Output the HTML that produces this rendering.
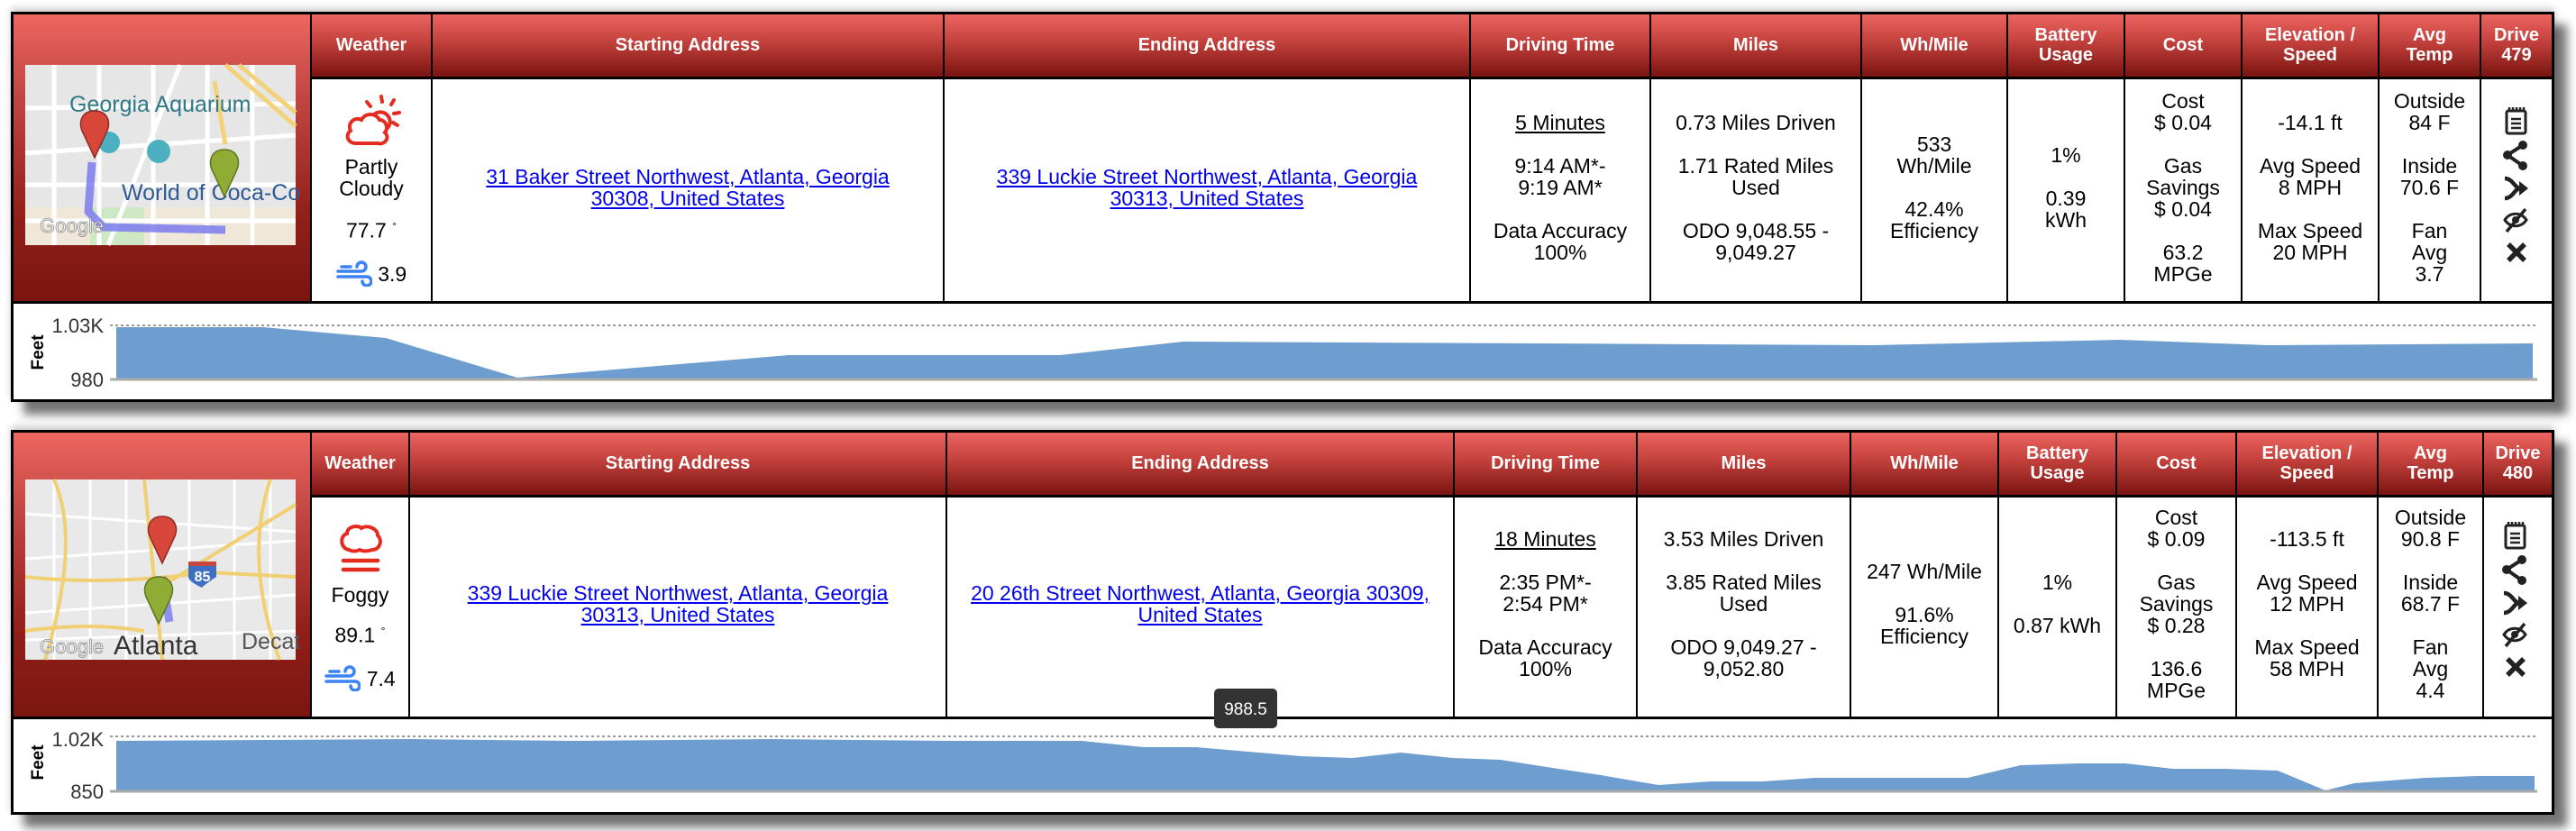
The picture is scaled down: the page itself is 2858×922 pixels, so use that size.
<!DOCTYPE html>
<html><head><meta charset="utf-8">
<style>
html,body{margin:0;padding:0;background:#fff;width:2858px;height:922px;overflow:hidden;font-family:"Liberation Sans",Arial,sans-serif;}
.card{position:absolute;left:12px;border:3px solid #000;background:#fff;box-shadow:14px 14px 10px rgba(0,0,0,.55),0 -4px 8px rgba(0,0,0,.2);box-sizing:border-box;}
table{border-collapse:collapse;table-layout:fixed;position:absolute;left:0;top:0;}
th{background:linear-gradient(#ec6560,#c84440 40%,#7a1410);color:#fff;font-size:20px;font-weight:bold;line-height:22px;border-left:2px solid #000;border-bottom:3px solid #000;padding:0;text-align:center;}
td{border-left:2px solid #000;text-align:center;vertical-align:middle;font-size:23px;line-height:24px;padding:0 0 6px 0;color:#000;}
td.img{background:linear-gradient(#ee6660,#c64a45 25%,#921f19 70%,#7a1510);border-left:none;border-bottom:none;}
td.img{position:relative;}
a{color:#0000ee;text-decoration:underline;}
u{text-decoration:underline;}
.chart{position:absolute;left:0;width:100%;border-top:3px solid #000;}
.icons{font-size:0;}
</style></head><body>

<!-- CARD 1 -->
<div class="card" style="top:13px;width:2822px;height:433px;">
<table style="width:2816px;">
<colgroup><col style="width:330px"><col style="width:134px"><col style="width:568px"><col style="width:584px"><col style="width:200px"><col style="width:234px"><col style="width:162px"><col style="width:130px"><col style="width:130px"><col style="width:152px"><col style="width:113px"><col style="width:79px"></colgroup>
<tr style="height:70px"><td class="img" rowspan="2"></td><th>Weather</th><th>Starting Address</th><th>Ending Address</th><th>Driving Time</th><th>Miles</th><th>Wh/Mile</th><th>Battery<br>Usage</th><th>Cost</th><th>Elevation /<br>Speed</th><th>Avg<br>Temp</th><th>Drive<br>479</th></tr>
<tr style="height:248px">
<td style="padding-bottom:0"><svg width="66" height="62" viewBox="0 0 66 62"><g fill="none" stroke="#e52b1f" stroke-width="4" stroke-linecap="round"><path d="M16 56 C6 56 4 46 10 42 C6 34 14 26 22 30 C26 22 38 22 42 30 C50 30 52 40 48 44 C54 50 48 58 40 56 Z"/><path d="M36 24 A10 10 0 1 1 50 40"/><path d="M44 4 L45 10 M58 8 L55 13 M64 22 L58 23 M62 36 L57 33 M28 10 L32 15"/></g></svg>
<div style="margin-top:4px">Partly<br>Cloudy</div><div style="margin-top:18px">77.7 <sup style="font-size:12px">°</sup></div>
<div style="margin-top:20px"><svg width="40" height="30" viewBox="0 0 40 30" style="vertical-align:-6px"><g fill="none" stroke="#3b82f6" stroke-width="3.5" stroke-linecap="round"><path d="M2 13 H28 A5 5 0 1 0 23 8"/><path d="M2 19 H34 A5 5 0 1 1 29 24"/><path d="M6 8 H16"/></g></svg> 3.9</div></td>
<td><a>31 Baker Street Northwest, Atlanta, Georgia<br>30308, United States</a></td>
<td><a>339 Luckie Street Northwest, Atlanta, Georgia<br>30313, United States</a></td>
<td><u>5 Minutes</u><br><br>9:14 AM*-<br>9:19 AM*<br><br>Data Accuracy<br>100%</td>
<td>0.73 Miles Driven<br><br>1.71 Rated Miles<br>Used<br><br>ODO 9,048.55 -<br>9,049.27</td>
<td>533<br>Wh/Mile<br><br>42.4%<br>Efficiency</td>
<td>1%<br><br>0.39<br>kWh</td>
<td>Cost<br>$ 0.04<br><br>Gas<br>Savings<br>$ 0.04<br><br>63.2<br>MPGe</td>
<td>-14.1 ft<br><br>Avg Speed<br>8 MPH<br><br>Max Speed<br>20 MPH</td>
<td>Outside<br>84 F<br><br>Inside<br>70.6 F<br><br>Fan<br>Avg<br>3.7</td>
<td class="icons">&nbsp;</td>
</tr></table>
<div class="chart" style="top:318px;height:108px;"></div>
</div>

<!-- CARD 2 -->
<div class="card" style="top:477px;width:2822px;height:427px;">
<table style="width:2816px;">
<colgroup><col style="width:330px"><col style="width:109px"><col style="width:596px"><col style="width:563px"><col style="width:203px"><col style="width:237px"><col style="width:164px"><col style="width:131px"><col style="width:133px"><col style="width:157px"><col style="width:117px"><col style="width:76px"></colgroup>
<tr style="height:70px"><td class="img" rowspan="2"></td><th>Weather</th><th>Starting Address</th><th>Ending Address</th><th>Driving Time</th><th>Miles</th><th>Wh/Mile</th><th>Battery<br>Usage</th><th>Cost</th><th>Elevation /<br>Speed</th><th>Avg<br>Temp</th><th>Drive<br>480</th></tr>
<tr style="height:245px">
<td style="padding-bottom:0"><svg width="50" height="60" viewBox="0 0 50 60"><g fill="none" stroke="#e52b1f" stroke-linecap="round"><path stroke-width="4" d="M12 30 C2 28 2 14 10 12 C10 4 22 2 26 6 C32 2 44 6 44 14 C50 20 46 30 38 30 C32 32 28 32 24 30 C20 32 16 32 12 30 Z"/><path stroke-width="4.5" d="M6 42 H44 M6 52 H44"/></g></svg>
<div style="margin-top:4px">Foggy</div><div style="margin-top:16px">89.1 <sup style="font-size:12px">°</sup></div>
<div style="margin-top:20px"><svg width="40" height="30" viewBox="0 0 40 30" style="vertical-align:-6px"><g fill="none" stroke="#3b82f6" stroke-width="3.5" stroke-linecap="round"><path d="M2 13 H28 A5 5 0 1 0 23 8"/><path d="M2 19 H34 A5 5 0 1 1 29 24"/><path d="M6 8 H16"/></g></svg> 7.4</div></td>
<td><a>339 Luckie Street Northwest, Atlanta, Georgia<br>30313, United States</a></td>
<td><a>20 26th Street Northwest, Atlanta, Georgia 30309,<br>United States</a></td>
<td><u>18 Minutes</u><br><br>2:35 PM*-<br>2:54 PM*<br><br>Data Accuracy<br>100%</td>
<td>3.53 Miles Driven<br><br>3.85 Rated Miles<br>Used<br><br>ODO 9,049.27 -<br>9,052.80</td>
<td>247 Wh/Mile<br><br>91.6%<br>Efficiency</td>
<td>1%<br><br>0.87 kWh</td>
<td>Cost<br>$ 0.09<br><br>Gas<br>Savings<br>$ 0.28<br><br>136.6<br>MPGe</td>
<td>-113.5 ft<br><br>Avg Speed<br>12 MPH<br><br>Max Speed<br>58 MPH</td>
<td>Outside<br>90.8 F<br><br>Inside<br>68.7 F<br><br>Fan<br>Avg<br>4.4</td>
<td class="icons">&nbsp;</td>
</tr></table>
<div class="chart" style="top:315px;height:106px;"></div>
</div>

<svg style="position:absolute;left:0;top:0" width="2858" height="922" viewBox="0 0 2858 922">
<defs>
<g id="pinR"><path d="M0 0 C-14 0 -18 12 -14 22 L0 52 L14 22 C18 12 14 0 0 0 Z" fill="#d9473b" stroke="#8e2a22" stroke-width="1.5"/></g>
<g id="pinG"><path d="M0 0 C-14 0 -18 12 -14 22 L0 52 L14 22 C18 12 14 0 0 0 Z" fill="#8fad35" stroke="#5d7420" stroke-width="1.5"/></g>
<g id="notes"><rect x="4" y="5" width="21" height="25" rx="2" fill="none" stroke="#222" stroke-width="3"/><path d="M7 1 V6 M11 1 V6 M15 1 V6 M19 1 V6 M23 1 V6 M9 14 H20 M9 19 H20 M9 24 H20" stroke="#222" stroke-width="2.5"/></g>
<g id="share"><circle cx="22" cy="4" r="5" fill="#222"/><circle cx="5" cy="15" r="5" fill="#222"/><circle cx="22" cy="27" r="5" fill="#222"/><path d="M22 4 L5 15 L22 27" stroke="#222" stroke-width="4" fill="none"/></g>
<g id="merge"><path d="M1 3 C10 3 12 14 18 14 M1 25 C10 25 12 14 18 14 H20" stroke="#222" stroke-width="4.5" fill="none"/><path d="M17 6 L27 14 L17 22 Z" fill="#222"/></g>
<g id="eye"><path d="M2 14 C8 5 20 5 26 14 C20 23 8 23 2 14 Z" fill="none" stroke="#222" stroke-width="3"/><circle cx="14" cy="14" r="4" fill="#222"/><path d="M25 2 L4 27" stroke="#222" stroke-width="3.5"/></g>
<g id="x"><path d="M4 4 L22 22 M22 4 L4 22" stroke="#222" stroke-width="5.5"/></g>
</defs>

<g>
<rect x="28" y="72" width="300" height="200" fill="#e6e6e6"/>
<rect x="28" y="230" width="300" height="42" fill="#efe8d8"/>
<rect x="100" y="230" width="60" height="42" fill="#cfe8c4"/>
<g stroke="#fff" stroke-width="5" fill="none"><path d="M28 170 L328 150 M28 120 L328 115 M60 72 V272 M110 72 V272 M170 72 V272 M230 72 V272 M280 72 V272 M28 205 L328 205 M28 245 L328 245 M200 72 L120 272"/></g>
<g stroke="#f3d27a" stroke-width="5" fill="none"><path d="M250 72 L328 140 M265 72 L328 125 M238 90 L250 160"/></g>
<path d="M102 180 L98 235 L115 252 L250 255" stroke="#7b7bf0" stroke-width="9" fill="none" stroke-linejoin="round" opacity=".85"/>
<text x="77" y="124" font-size="25" fill="#2f7a86" font-family="Liberation Sans">Georgia Aquarium</text>
<text x="135" y="222" font-size="25" fill="#2f5a96" font-family="Liberation Sans">World of Coca-Co</text>
<text x="44" y="258" font-size="22" fill="#fff" stroke="#888" stroke-width=".8" font-family="Liberation Sans">Google</text>
<circle cx="176" cy="168" r="13" fill="#4bb0c0"/><circle cx="121" cy="158" r="12" fill="#4bb0c0"/>
<use href="#pinR" x="105" y="123"/>
<use href="#pinG" x="249" y="166"/>
</g>
<g>
<rect x="28" y="532" width="300" height="200" fill="#e9e9e9"/>
<g stroke="#fff" stroke-width="3" fill="none"><path d="M28 570 L328 590 M28 620 L328 600 M28 680 L328 660 M60 532 V732 M100 532 V732 M140 532 V732 M210 532 V732 M260 532 V732 M300 532 V732 M28 710 L328 700"/></g>
<g stroke="#f1cf73" stroke-width="4" fill="none"><path d="M28 640 Q120 650 230 635 L328 640 M160 532 L180 732 M180 650 L328 560 M28 700 Q100 690 160 700 M60 532 Q90 600 50 732 M300 532 Q270 620 310 732"/></g>
<path d="M180 640 L188 690" stroke="#7b7bf0" stroke-width="9" opacity=".8"/>
<path d="M209 623 H240 V640 Q225 650 224 652 Q209 645 209 640 Z" fill="#3f6fc2"/><rect x="209" y="623" width="31" height="5" fill="#c6473e"/>
<text x="224.5" y="645" font-size="16" fill="#fff" font-weight="bold" text-anchor="middle" font-family="Liberation Sans">85</text>
<text x="268" y="720" font-size="25" fill="#555" font-family="Liberation Sans">Decat</text>
<text x="44" y="725" font-size="22" fill="#fff" stroke="#888" stroke-width=".8" font-family="Liberation Sans">Google</text>
<text x="126" y="726" font-size="30" fill="#333" font-family="Liberation Sans">Atlanta</text>
<use href="#pinR" x="180" y="573"/>
<use href="#pinG" x="176" y="640"/>
</g>

<text transform="translate(48,391) rotate(-90)" font-size="19" font-weight="bold" text-anchor="middle" font-family="Liberation Sans">Feet</text>
<text x="115" y="369" font-size="22" text-anchor="end" fill="#333" font-family="Liberation Sans">1.03K</text>
<text x="115" y="429" font-size="22" text-anchor="end" fill="#333" font-family="Liberation Sans">980</text>
<line x1="122" y1="361" x2="2815" y2="361" stroke="#999" stroke-width="2" stroke-dasharray="3,3"/>
<polygon fill="#6e9ecf" points="129,363 292,363 428,375 574,419 875,394 1176,394 1313,379 2078,383 2352,377 2516,383 2810,381 2810,421 129,421"/>
<line x1="122" y1="421" x2="2815" y2="421" stroke="#aaa" stroke-width="3"/>

<text transform="translate(48,846) rotate(-90)" font-size="19" font-weight="bold" text-anchor="middle" font-family="Liberation Sans">Feet</text>
<text x="115" y="828" font-size="22" text-anchor="end" fill="#333" font-family="Liberation Sans">1.02K</text>
<text x="115" y="886" font-size="22" text-anchor="end" fill="#333" font-family="Liberation Sans">850</text>
<line x1="122" y1="817" x2="2815" y2="817" stroke="#999" stroke-width="2" stroke-dasharray="3,3"/>
<polygon fill="#6e9ecf" points="129,822 456,820 638,822 857,820 1057,822 1200,822 1269,829 1327,829 1443,839 1501,841 1554,835 1612,841 1665,843 1729,853 1776,860 1840,871 1898,867 1956,867 2014,863 2183,863 2242,849 2305,847 2358,847 2411,853 2469,853 2527,855 2580,877 2612,869 2691,863 2749,861 2812,861 2812,878 129,878"/>
<line x1="122" y1="878" x2="2815" y2="878" stroke="#aaa" stroke-width="3"/>
<rect x="1347" y="764" width="70" height="44" rx="5" fill="#333"/>
<text x="1382" y="793" font-size="19" fill="#fff" text-anchor="middle" font-family="Liberation Sans">988.5</text>

<use href="#notes" x="2777" y="118"/>
<use href="#share" x="2777" y="157"/>
<use href="#merge" x="2778" y="195"/>
<use href="#eye" x="2777" y="230"/>
<use href="#x" x="2779" y="267"/>
<use href="#notes" x="2776" y="578"/>
<use href="#share" x="2776" y="617"/>
<use href="#merge" x="2777" y="655"/>
<use href="#eye" x="2776" y="690"/>
<use href="#x" x="2778" y="727"/>
</svg>
</body></html>
